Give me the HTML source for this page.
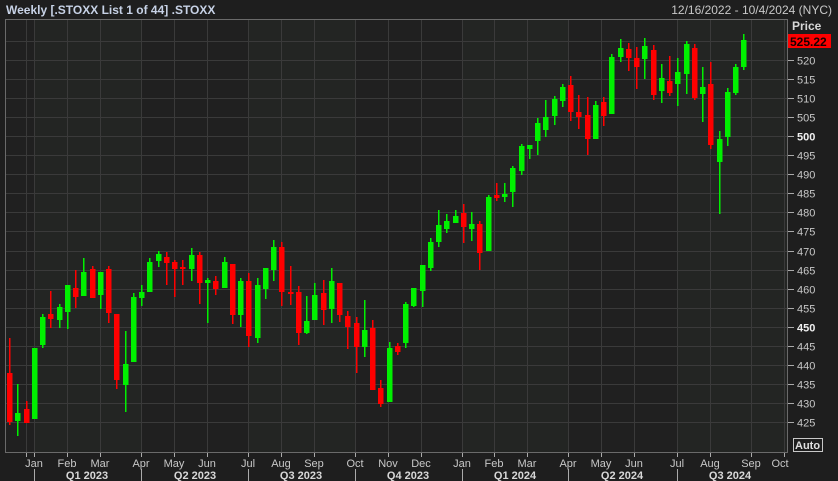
<!DOCTYPE html>
<html><head><meta charset="utf-8">
<style>
html,body{margin:0;padding:0;background:#1e1e1e;width:838px;height:481px;overflow:hidden}
svg{display:block}
text{font-family:"Liberation Sans","DejaVu Sans",sans-serif}
</style></head><body>
<svg id="s" width="838" height="481" xmlns="http://www.w3.org/2000/svg">
<rect x="0" y="0" width="838" height="481" fill="#1e1e1e"/>
<g id="bg"></g>
<g id="grid"></g>
<rect x="5.5" y="19.5" width="782" height="433" fill="none" stroke="#6a6a6a"/>
<g id="c"></g>
<text x="6" y="14" font-size="12" font-weight="bold" fill="#c7d2e6">Weekly [.STOXX List 1 of 44] .STOXX</text>
<text x="832" y="14" font-size="12" fill="#c8c8c8" text-anchor="end">12/16/2022 - 10/4/2024 (NYC)</text>
<text x="792" y="30" font-size="12" font-weight="bold" fill="#d8d8d8">Price</text>
<rect x="788" y="34" width="43" height="14" fill="#ff0000"/>
<text x="790" y="46" font-size="12" font-weight="bold" fill="#1a0000">525.22</text>
<g id="pl" font-size="11" fill="#c8c8c8"></g>
<rect x="793.5" y="438.5" width="29" height="13" fill="none" stroke="#c8c8c8"/>
<text x="795" y="449" font-size="11" font-weight="bold" fill="#e0e0e0">Auto</text>
<g id="ml" font-size="11" fill="#c8c8c8" text-anchor="middle">
<text x="34" y="467">Jan</text><text x="67" y="467">Feb</text><text x="100" y="467">Mar</text><text x="141" y="467">Apr</text><text x="174" y="467">May</text><text x="207" y="467">Jun</text><text x="248" y="467">Jul</text><text x="281" y="467">Aug</text><text x="314" y="467">Sep</text><text x="355" y="467">Oct</text><text x="388" y="467">Nov</text><text x="421" y="467">Dec</text><text x="462" y="467">Jan</text><text x="494" y="467">Feb</text><text x="527" y="467">Mar</text><text x="568" y="467">Apr</text><text x="601" y="467">May</text><text x="634" y="467">Jun</text><text x="677" y="467">Jul</text><text x="710" y="467">Aug</text><text x="751" y="467">Sep</text><text x="780" y="467">Oct</text>
</g>
<g font-size="11" font-weight="bold" fill="#d8d8d8" text-anchor="middle">
<text x="87" y="479">Q1 2023</text><text x="195" y="479">Q2 2023</text><text x="301" y="479">Q3 2023</text><text x="408" y="479">Q4 2023</text><text x="515" y="479">Q1 2024</text><text x="622" y="479">Q2 2024</text><text x="730" y="479">Q3 2024</text>
</g>
</svg>
<script>
var NS="http://www.w3.org/2000/svg";
function el(p,t,a){var e=document.createElementNS(NS,t);for(var k in a)e.setAttribute(k,a[k]);p.appendChild(e);return e;}
var bg=document.getElementById('bg'),grid=document.getElementById('grid'),c=document.getElementById('c'),pl=document.getElementById('pl');
var q=[6,34,141,248,355,462,568,677,787];
for(var i=0;i<q.length-1;i++)el(bg,'rect',{x:q[i],y:20,width:q[i+1]-q[i],height:432,fill:i%2?'#232523':'#202020'});
var mx=[26,34,67,100,141,174,207,248,281,314,355,388,421,462,494,527,568,601,634,677,710,751,784];
mx.forEach(function(x){el(grid,'line',{x1:x+.5,y1:20,x2:x+.5,y2:452,stroke:'#3a3a3a'});el(grid,'line',{x1:x+.5,y1:453,x2:x+.5,y2:457,stroke:'#aaa'});});
[34,141,248,355,462,568,677].forEach(function(x){el(grid,'line',{x1:x+.5,y1:469,x2:x+.5,y2:481,stroke:'#aaa'});});
for(var p=425;p<=525;p+=5){var y=Math.round(60+(520-p)*3.81)+.5;el(grid,'line',{x1:6,y1:y,x2:787,y2:y,stroke:'#3a3a3a'});
 el(grid,'line',{x1:788,y1:y,x2:794,y2:y,stroke:'#aaa'});
 if(p<525){var t=el(pl,'text',{x:797,y:y+4});t.textContent=p;if(p==450||p==500){t.setAttribute('font-weight','bold');t.setAttribute('fill','#f0f0f0');}}}
var d=[
['r',373,422,338,425],['g',413,421,384,436],['r',409,423,401,423],['g',348,419],['g',317,345,314,348],['r',314,319,291,328],['g',307,320,304,328],['g',285,312,285,329],['r',288,297,270,308],['g',272,296,258,296],
['r',269,298,266,298],['g',272,295,272,309],['r',269,313,266,323],['r',314,380,314,389],['g',364,385,331,412],['g',297,362,293,362],['g',292,298,285,306],['g',262,292,258,292],['g',254,261,251,267],['r',257,263,252,285],
['r',262,269,260,297],['r',267,268,260,285],['g',255,269,248,281],['r',255,283,252,304],['g',280,283,278,323],['r',281,289,276,295],['g',262,288,257,288],['r',264,315,264,324],['g',281,315,278,327],['r',281,336,273,347],
['g',285,338,278,343],['g',268,289,268,299],['g',247,270,240,281],['r',247,292,242,306],['r',292,293,266,305],['r',292,333,286,345],['g',321,333,296,334],['g',295,320,283,320],['r',293,310,280,325],['g',281,309,268,323],
['r',283,315,283,322],['r',316,327,311,349],['r',323,347,317,373],['g',330,347,300,357],['r',328,390,320,390],['r',388,404,380,407],['g',348,402,342,402],['r',346,352,343,355],['g',304,343,302,348],['g',288,306,288,307],
['g',265,291,265,307],['g',242,268,238,271],['g',225,242,210,247],['g',221,229,214,233],['g',216,223,210,223],['r',213,227,204,243],['g',224,229,212,241],['r',224,253,221,270],['g',197,251,195,251],['r',195,198,183,201],
['g',194,197,183,202],['g',168,192,166,207],['g',146,171,144,175],['g',145,149,145,159],['g',123,141,118,155],['g',117,130,100,137],['g',99,116,96,125],['g',87,101,84,107],['r',85,112,76,121],['r',112,117,95,129],
['r',115,139,97,155],['g',105,139,101,139],['r',102,116,97,126],['g',57,114,54,114],['g',48,57,39,62],['r',49,58,43,71],['r',58,67,47,89],['g',46,59,38,79],['r',50,95,45,100],['g',78,91,64,103],
['r',81,93,56,96],['g',72,84,58,106],['g',44,74,41,94],['r',48,98,44,100],['g',87,94,67,122],['r',84,145,62,149],['g',139,162,131,214],['g',92,137,88,146],['g',67,93,64,95],['g',40,67,34,70]];
d.forEach(function(a,i){var x=Math.round(9+8.25*i),col=a[0]=='g'?'#00f000':'#ff0000';var wt=a[3]||a[1],wb=a[4]||a[2];
 el(c,'rect',{x:x,y:wt,width:1.5,height:Math.max(1,wb-wt),fill:col});
 el(c,'rect',{x:x-2,y:a[1],width:5.5,height:Math.max(2,a[2]-a[1]),fill:col});});
</script>
</body></html>
